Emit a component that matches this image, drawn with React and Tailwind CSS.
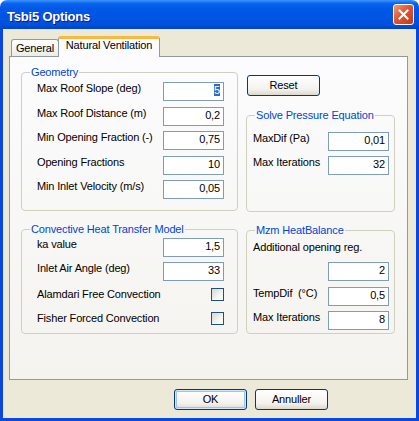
import React from 'react';

// Windows XP style "Tsbi5 Options" dialog

function Field({ value, selected }) {
  return (
    <div className="h-[19px] w-[61px] shrink-0 border border-[#7f9db9] bg-white pr-[3px] pt-[1px] text-right leading-[13px]">
      {selected ? <span className="bg-[#316ac5] text-white">{value}</span> : value}
    </div>
  );
}

function Row({ label, value, selected }) {
  return (
    <div className="flex items-start justify-between">
      <span className="whitespace-pre leading-[13px]">{label}</span>
      <Field value={value} selected={selected} />
    </div>
  );
}

function CheckRow({ label }) {
  return (
    <div className="flex h-[19px] items-center justify-between">
      <span className="leading-[13px]">{label}</span>
      <div className="h-[13px] w-[13px] border border-[#1c5180] bg-[linear-gradient(135deg,#d8d8d1,#f4f4f0_60%,#ffffff)]" />
    </div>
  );
}

function Group({ title, className, children }) {
  return (
    <fieldset className={`rounded-[4px] border border-[#d0d0bf] ${className}`}>
      <legend className="ml-[8px] px-[1px] leading-[15px] text-[#0046d5]">{title}</legend>
      {children}
    </fieldset>
  );
}

function Button({ children, focused }) {
  return (
    <div
      className={
        focused
          ? 'flex h-[21px] w-[73px] items-center justify-center rounded-[3px] border border-[#003c74] bg-[linear-gradient(to_bottom,#ffffff,#f3f2ee_70%,#dcd8cb)] leading-[13px] shadow-[inset_0_0_0_1px_#cee7ff,inset_0_0_0_2px_#a3c0f2]'
          : 'flex h-[21px] w-[73px] items-center justify-center rounded-[3px] border border-[#003c74] bg-[linear-gradient(to_bottom,#ffffff,#f3f2ee_70%,#dcd8cb)] leading-[13px]'
      }
    >
      {children}
    </div>
  );
}

export default function App() {
  return (
    <div className="flex h-[421px] w-[419px] flex-col overflow-hidden rounded-t-[7px] bg-white font-['Liberation_Sans',Arial,sans-serif] text-[11px] tracking-[-0.15px] text-black">
      {/* Title bar */}
      <div className="flex h-[29px] shrink-0 items-start justify-between bg-[linear-gradient(to_bottom,#3d95ff_0%,#0a64ec_12%,#0058e6_30%,#0055e3_60%,#0050dc_85%,#0043c4_100%)] pl-[7px] pr-[5px]">
        <span className="pt-[9px] text-[13px] font-bold leading-[15px] tracking-[-0.2px] text-white [text-shadow:1px_1px_#0f1a8a]">
          Tsbi5 Options
        </span>
        <div className="mt-[4px] flex h-[21px] w-[21px] items-center justify-center rounded-[3px] border border-white bg-[linear-gradient(135deg,#f29a7c,#e0552f_45%,#c23b17)]">
          <svg width="11" height="11" viewBox="0 0 11 11">
            <path d="M1.5 1.5l8 8M9.5 1.5l-8 8" stroke="white" strokeWidth="2" strokeLinecap="square" />
          </svg>
        </div>
      </div>

      {/* Client area */}
      <div className="flex flex-1 flex-col border-x-[3px] border-b-[3px] border-[#0b47dd] bg-[#ece9d8] pl-[6px] pt-[7px]">
        {/* Tabs */}
        <div className="ml-[2px] flex h-[20px] items-end">
          <div className="flex h-[17px] w-[48px] items-center justify-center rounded-t-[3px] border-x border-t border-[#919b9c] bg-[linear-gradient(to_bottom,#ffffff,#ecebe6)] leading-[13px]">
            General
          </div>
          <div className="relative z-10 -mb-[1px] -ml-[1px] h-[21px] w-[102px] rounded-t-[3px] border-x border-t-[3px] border-x-[#919b9c] border-t-[#f9b93f] bg-[#fcfcfe] text-center leading-[13px]">
            Natural Ventilation
          </div>
        </div>

        {/* Tab panel */}
        <div className="flex h-[324px] w-[399px] gap-[8px] border border-[#919b9c] bg-[linear-gradient(to_bottom,#fcfcfe,#f4f3ee)] pl-[11px] pt-[8px]">
          <div className="flex w-[217px] flex-col">
            <Group title="Geometry" className="h-[146px]">
              <div className="flex flex-col gap-[5.5px] pl-[15px] pr-[13px] pt-[2px]">
                <Row label="Max Roof Slope (deg)" value="5" selected />
                <Row label="Max Roof Distance (m)" value="0,2" />
                <Row label="Min Opening Fraction (-)" value="0,75" />
                <Row label="Opening Fractions" value="10" />
                <Row label="Min Inlet Velocity (m/s)" value="0,05" />
              </div>
            </Group>
            <Group title="Convective Heat Transfer Model" className="mt-[11px] h-[112px]">
              <div className="flex flex-col gap-[4.5px] pl-[15px] pr-[13px] pt-[1px]">
                <Row label="ka value" value="1,5" />
                <Row label="Inlet Air Angle (deg)" value="33" />
                <CheckRow label="Alamdari Free Convection" />
                <CheckRow label="Fisher Forced Convection" />
              </div>
            </Group>
          </div>

          <div className="flex w-[149px] flex-col">
            <div className="ml-[1px] mt-[10px]">
              <Button>Reset</Button>
            </div>
            <Group title="Solve Pressure Equation" className="mt-[12px] h-[104px]">
              <div className="flex flex-col gap-[5px] pl-[6px] pr-[5px] pt-[9px]">
                <Row label="MaxDif (Pa)" value="0,01" />
                <Row label="Max Iterations" value="32" />
              </div>
            </Group>
            <Group title="Mzm HeatBalance" className="mt-[11px] h-[111px]">
              <div className="flex flex-col pl-[6px] pr-[5px] pt-[3px]">
                <span className="leading-[13px]">Additional opening reg.</span>
                <div className="mt-[8px] flex flex-col gap-[5.5px]">
                  <div className="flex justify-end">
                    <Field value="2" />
                  </div>
                  <Row label={'TempDif  (\u00b0C)'} value="0,5" />
                  <Row label="Max Iterations" value="8" />
                </div>
              </div>
            </Group>
          </div>
        </div>

        {/* Dialog buttons */}
        <div className="mt-[9px] flex gap-[8px] pl-[165px]">
          <Button focused>OK</Button>
          <Button>Annuller</Button>
        </div>
      </div>
    </div>
  );
}
